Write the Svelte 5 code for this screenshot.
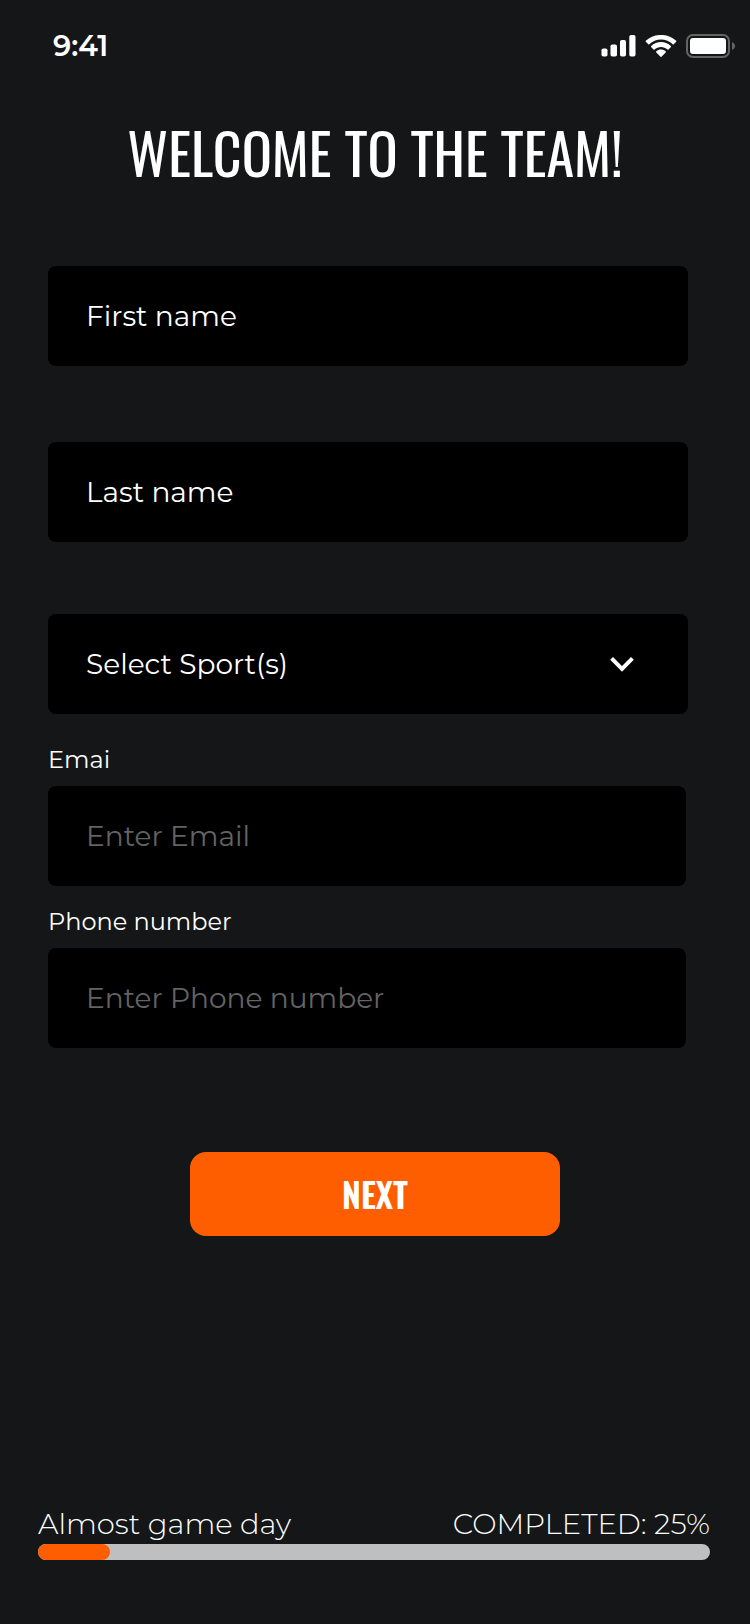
<script lang="ts">
  let firstName = $state('');
  let lastName = $state('');
  let sport = $state('');
  let email = $state('');
  let phone = $state('');

  const sports = ['Basketball', 'Football', 'Soccer', 'Tennis'];

  let step = $state(3);
  const totalSteps = 28;
  let fill = $derived((step / totalSteps) * 100);

  function next(event: SubmitEvent) {
    event.preventDefault();
    if (step < totalSteps) step += 1;
  }
</script>

<div class="screen">
  <header class="status-bar">
    <time>9:41</time>
    <div class="status-icons">
      <svg width="35" height="22" viewBox="0 0 35 22" aria-hidden="true">
        <rect x="0.500" y="13.500" width="6" height="8" rx="1.800" />
        <rect x="9.500" y="9.500" width="6.500" height="12" rx="1.800" />
        <rect x="19" y="5" width="6" height="16.500" rx="1.800" />
        <rect x="28.300" y="0" width="6.200" height="21.500" rx="1.800" />
      </svg>
      <svg width="32" height="22" viewBox="0 0 32 22" aria-hidden="true">
        <path d="M16 4.600c4.500 0 8.600 1.700 11.700 4.700.3.300.7.300 1 0l2.500-2.500c.3-.3.300-.8 0-1.100C22.700-2 9.300-2 .8 5.700c-.3.300-.3.800 0 1.100l2.500 2.500c.3.300.7.300 1 0C7.400 6.300 11.500 4.600 16 4.600z" />
        <path d="M16 12c2.400 0 4.700.9 6.500 2.500.3.300.7.300 1 0l2.400-2.500c.3-.3.300-.8 0-1.100-5.600-5.200-14.200-5.200-19.800 0-.3.300-.3.800 0 1.100l2.400 2.500c.3.300.7.300 1 0C11.300 12.900 13.600 12 16 12z" />
        <path d="M20.700 16.300c.3.300.3.800 0 1.100l-4.200 4.300c-.3.300-.7.300-1 0l-4.200-4.300c-.3-.3-.3-.8 0-1.100 2.700-2.300 6.700-2.300 9.400 0z" />
      </svg>
      <svg width="49" height="24" viewBox="0 0 49 24" aria-hidden="true">
        <rect class="shell" x="1" y="1" width="42" height="22" rx="6" />
        <rect x="4" y="4" width="36" height="16" rx="3" />
        <path class="cap" d="M46 8c2 1 3 2.400 3 4s-1 3-3 4z" />
      </svg>
    </div>
  </header>

  <h1>WELCOME TO THE TEAM!</h1>

  <form onsubmit={next}>
    <div class="names">
      <input type="text" aria-label="First name" placeholder="First name" bind:value={firstName} />
      <input type="text" aria-label="Last name" placeholder="Last name" bind:value={lastName} />
    </div>

    <div class="select">
      <select aria-label="Select Sport(s)" bind:value={sport}>
        <option value="">Select Sport(s)</option>
        {#each sports as name}
          <option value={name}>{name}</option>
        {/each}
      </select>
      <svg width="24" height="18" viewBox="0 0 24 18" aria-hidden="true">
        <path d="M1.600 3.400L12 13.800 22.400 3.400" />
      </svg>
    </div>

    <div class="contact">
      <label for="email">Emai</label>
      <input id="email" type="email" placeholder="Enter Email" bind:value={email} />
      <label for="phone">Phone number</label>
      <input id="phone" type="tel" placeholder="Enter Phone number" bind:value={phone} />
    </div>

    <button type="submit">NEXT</button>
  </form>

  <footer>
    <div class="progress-text">
      <span>Almost game day</span>
      <span>COMPLETED: 25%</span>
    </div>
    <div class="track">
      <div class="fill" style="width: {fill}%"></div>
    </div>
  </footer>
</div>

<style>
  :global(body) {
    background: #141617;
  }

  .screen {
    display: flex;
    flex-direction: column;
    box-sizing: border-box;
    min-height: 100vh;
    padding-bottom: 64px;
    background: #141617;
    color: #fff;
    font-family: Montserrat, Inter, sans-serif;
    font-size: 28px;
    font-weight: 400;
  }

  .status-bar {
    display: flex;
    align-items: center;
    justify-content: space-between;
    height: 92px;
    padding: 0 15px 0 53px;
  }

  time {
    font-size: 29px;
    font-weight: 600;
    line-height: 36px;
  }

  .status-icons {
    display: flex;
    align-items: center;
    gap: 9px;
  }

  .status-icons svg {
    fill: #fff;
  }

  .status-icons .shell {
    fill: none;
    stroke: #636465;
    stroke-width: 2;
  }

  .status-icons .cap {
    fill: #636465;
  }

  h1 {
    margin: 14px 0 68px;
    font-family: Oswald, "Roboto Condensed", "Liberation Sans Narrow", sans-serif;
    font-size: 56px;
    font-weight: 400;
    line-height: 92px;
    text-align: center;
  }

  form {
    display: flex;
    flex-direction: column;
    padding: 0 62px 0 48px;
  }

  input,
  select {
    box-sizing: border-box;
    width: 100%;
    height: 100px;
    padding: 0 38px;
    border: 0;
    border-radius: 8px;
    background: #000;
    color: #fff;
    font: inherit;
  }

  input::placeholder {
    color: #fff;
    opacity: 1;
  }

  .names {
    display: grid;
    gap: 76px;
  }

  .select {
    display: grid;
    align-items: center;
    margin-top: 72px;
  }

  .select select,
  .select svg {
    grid-area: 1 / 1;
  }

  select {
    appearance: none;
  }

  .select svg {
    justify-self: end;
    margin-right: 54px;
    fill: none;
    stroke: #fff;
    stroke-width: 4;
    pointer-events: none;
  }

  .contact {
    display: flex;
    flex-direction: column;
    margin-top: 10px;
    padding-right: 2px;
  }

  label {
    padding: 18px 0 8px;
    font-size: 24px;
    line-height: 36px;
  }

  .contact input::placeholder {
    color: #636363;
  }

  button {
    align-self: center;
    width: 370px;
    max-width: 100%;
    height: 84px;
    margin: 104px 0 48px 14px;
    padding: 0 0 2px;
    border: 0;
    border-radius: 16px;
    background: #ff5e00;
    color: #fff;
    font-family: Oswald, "Roboto Condensed", "Liberation Sans Narrow", sans-serif;
    font-size: 34px;
    font-weight: 600;
    cursor: pointer;
  }

  footer {
    margin-top: auto;
    padding: 0 40px 0 38px;
  }

  .progress-text {
    display: flex;
    justify-content: space-between;
    font-size: 29px;
    font-weight: 300;
    line-height: 40px;
  }

  .track {
    height: 16px;
    border-radius: 8px;
    background: #bfbfbf;
  }

  .fill {
    height: 100%;
    border-radius: 8px;
    background: #ff5e00;
  }
</style>
